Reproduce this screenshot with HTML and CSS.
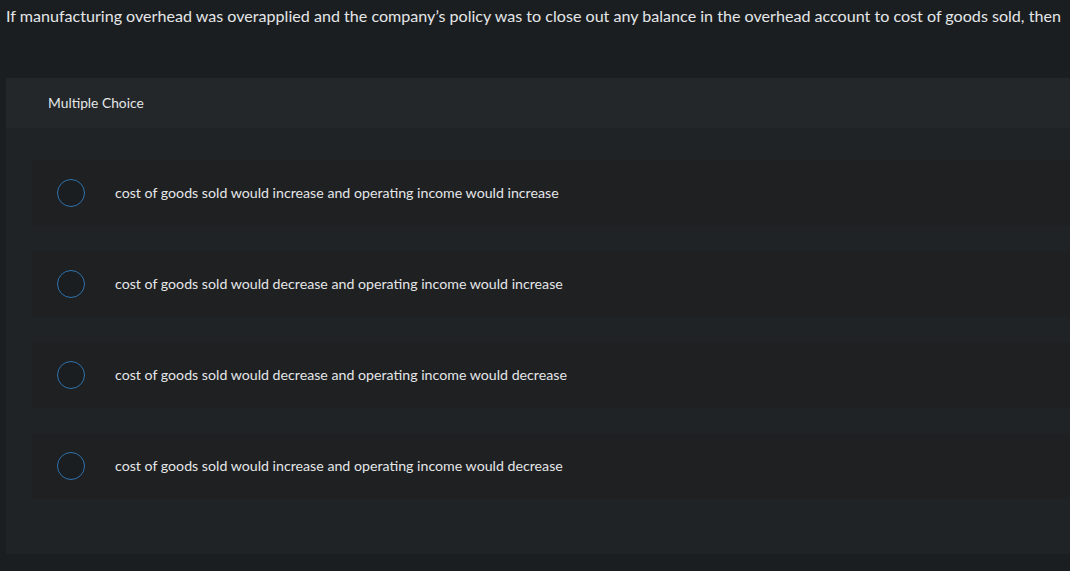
FILE: index.html
```html
<!DOCTYPE html>
<html lang="en">
<head>
  <meta charset="UTF-8">
  <meta name="viewport" content="width=device-width, initial-scale=1.0">
  <title>Multiple Choice</title>
  <link rel="stylesheet" href="styles.css">
</head>
<body>
  <p class="question">If manufacturing overhead was overapplied and the company’s policy was to close out any balance in the overhead account to cost of goods sold, then</p>

  <div class="panel">
    <div class="panel-head">Multiple Choice</div>
    <div class="options">
      <label class="option">
        <span class="radio"></span>
        <span class="option-text">cost of goods sold would increase and operating income would increase</span>
      </label>
      <label class="option">
        <span class="radio"></span>
        <span class="option-text">cost of goods sold would decrease and operating income would increase</span>
      </label>
      <label class="option">
        <span class="radio"></span>
        <span class="option-text">cost of goods sold would decrease and operating income would decrease</span>
      </label>
      <label class="option">
        <span class="radio"></span>
        <span class="option-text">cost of goods sold would increase and operating income would decrease</span>
      </label>
    </div>
  </div>
</body>
</html>
```

FILE: styles.css
```css
body {
  margin: 0;
  background: #1b1e20;
  color: #e4e6e8;
  font-family: Lato, "Liberation Sans", sans-serif;
  overflow: hidden;
  width: 1070px;
  height: 571px;
}

.question {
  margin: 0;
  padding: 6px 0 0 6px;
  font-size: 16.1px;
  line-height: 20px;
  white-space: nowrap;
}

.panel {
  margin: 52px 0 0 6px;
  width: 1100px;
  background: #202325;
}

.panel-head {
  background: #232729;
  height: 50px;
  line-height: 50px;
  padding-left: 42px;
  font-size: 13.8px;
}

.options {
  display: flex;
  flex-direction: column;
  gap: 25px;
  padding: 32px 0 55px 26px;
}

.option {
  display: flex;
  align-items: center;
  height: 66px;
  background: #1f2022;
  cursor: pointer;
}

.radio {
  box-sizing: border-box;
  width: 28px;
  height: 28px;
  margin-left: 25px;
  border: 1.5px solid #2f72ae;
  border-radius: 50%;
  background: #1b1e20;
  flex: none;
}

.option-text {
  margin-left: 30px;
  padding-bottom: 2px;
  font-size: 14.2px;
}
```
